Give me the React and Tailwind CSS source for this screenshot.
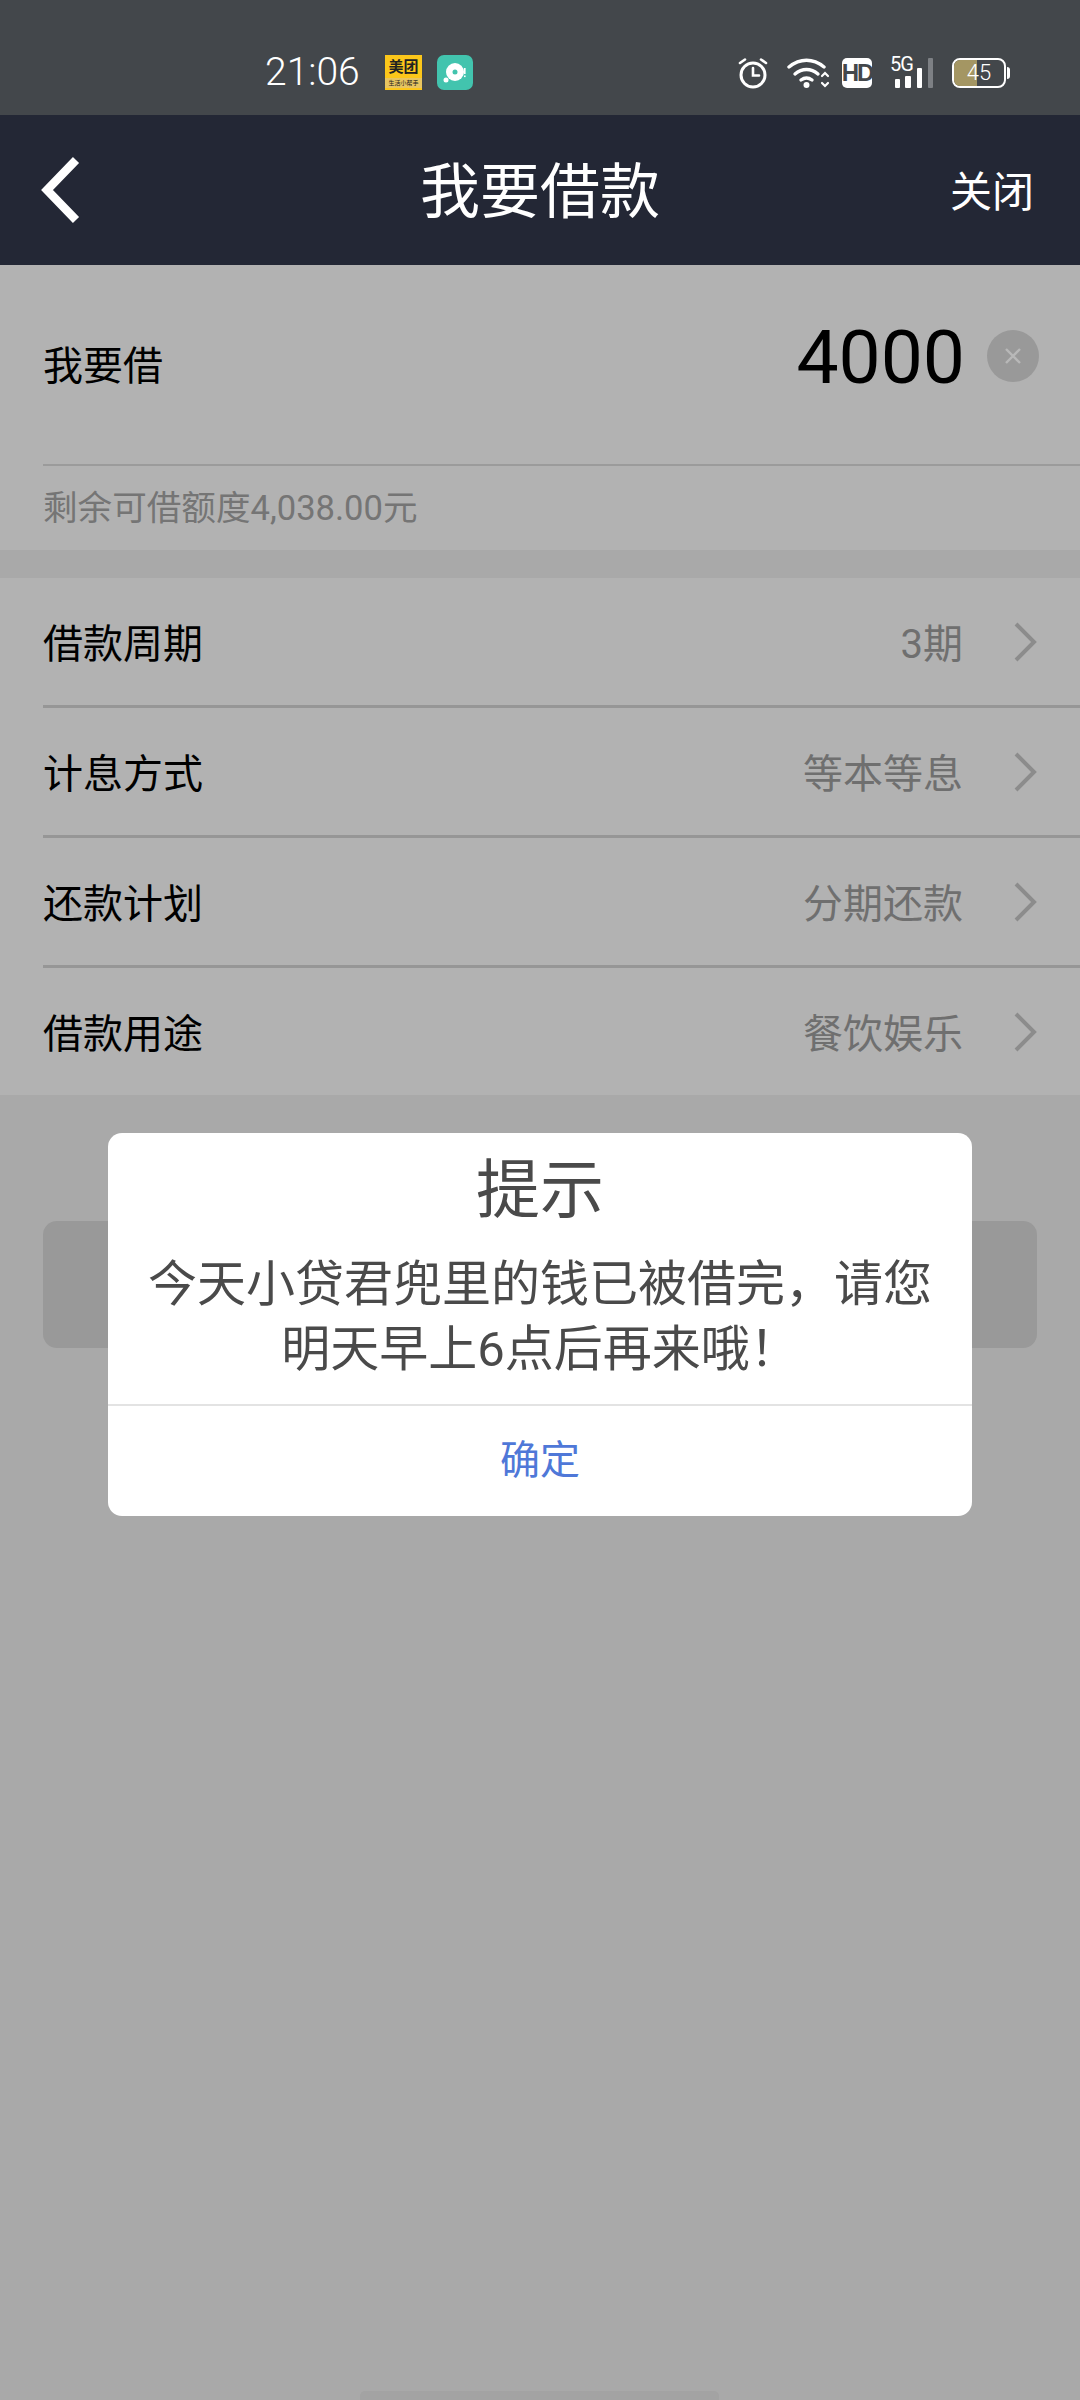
const font = { fontFamily: 'Roboto, "Noto Sans CJK SC", sans-serif' };

function StatusIcons() {
  return (
    <div className="flex items-center">
      {/* alarm */}
      <svg width="32" height="32" viewBox="0 0 32 32" fill="none" stroke="white" strokeWidth="3" strokeLinecap="round" className="ml-[737px]">
        <circle cx="16" cy="18" r="12" />
        <path d="M16 11v7.5h6" strokeWidth="2.6" />
        <path d="M3 6l5-3.5M29 6l-5-3.5" strokeWidth="2.6" />
      </svg>
      {/* wifi */}
      <svg width="44" height="32" viewBox="0 0 44 32" fill="none" stroke="white" strokeLinecap="round" className="ml-[18px]">
        <path d="M2 10C13 1 26 1 37 10" strokeWidth="3.4" />
        <path d="M8 17c7-6 16-6 23 0" strokeWidth="3.4" />
        <path d="M14 23c4-3 7-3 11 0" strokeWidth="3.4" />
        <circle cx="19.5" cy="28" r="3" fill="white" stroke="none" />
        <path d="M35 19l3-3 3 3M35 26l3 3 3-3" strokeWidth="2.2" />
      </svg>
      {/* HD */}
      <div className="ml-[11px] flex h-[30px] w-[30px] items-center justify-center rounded-[5px] bg-white text-[24px] font-bold leading-none tracking-[-2px] text-[#43474b]" style={{ fontFamily: '"Liberation Sans", sans-serif' }}>HD</div>
      {/* 5G signal */}
      <div className="relative ml-[18px] h-[32px] w-[44px]">
        <span className="absolute left-0 top-[-3px] text-[20px] leading-[20px] tracking-[-1px] text-white">5G</span>
        <svg width="44" height="32" viewBox="0 0 44 32" className="absolute left-0 top-0">
          <rect x="5" y="22" width="5" height="9" rx="1" fill="white" />
          <rect x="15" y="19" width="6" height="12" rx="1" fill="white" />
          <rect x="27" y="11" width="5" height="20" rx="1" fill="white" />
          <rect x="38" y="1" width="5" height="30" rx="1" fill="#7d8084" />
        </svg>
      </div>
      {/* battery */}
      <div className="ml-[18px] flex items-center">
        <div className="relative h-[30px] w-[54px] overflow-hidden rounded-[8px] border-[2.5px] border-white">
          <div className="h-full w-[23px] bg-[#a49663]" />
          <span className="absolute inset-0 flex items-center justify-center text-[22px] font-light leading-none text-white">45</span>
        </div>
        <div className="ml-[1px] h-[12px] w-[3px] rounded-r-sm bg-white" />
      </div>
    </div>
  );
}

function StatusBar() {
  return (
    <div className="relative flex h-[115px] items-end bg-[#43474b] pb-[26px]">
      <div className="absolute left-[265px] top-[47px] text-[39px] font-light leading-[50px] text-white">21:06</div>
      <div className="absolute left-[385px] top-[55px] flex h-[35px] w-[37px] flex-col items-center bg-[#fcc71a]">
        <span className="mt-[3px] text-[15px] font-bold leading-[18px] text-[#222]">美团</span>
        <span className="mt-[2px] w-full bg-[#e8c560] text-center text-[6px] leading-[10px] text-[#222]">生活小帮手</span>
      </div>
      <div className="absolute left-[437px] top-[55px] flex h-[35px] w-[36px] items-center justify-center rounded-[7px] bg-[#42c4ae]">
        <svg width="36" height="35" viewBox="0 0 36 35">
          <circle cx="18" cy="17" r="9" fill="white" />
          <circle cx="18" cy="17" r="2.5" fill="#42c4ae" />
          <circle cx="9" cy="25" r="2.5" fill="white" />
          <rect x="27" y="13" width="1.6" height="6" fill="white" />
          <rect x="27" y="20.5" width="1.6" height="1.6" fill="white" />
        </svg>
      </div>
      <StatusIcons />
    </div>
  );
}

function Chevron() {
  return (
    <svg width="23" height="40" viewBox="0 0 23 40" fill="none" stroke="#8c8c8c" strokeWidth="4" className="ml-[51px]">
      <path d="M2 2l18 18L2 38" />
    </svg>
  );
}

function Row({ label, value, last }) {
  return (
    <div className={`flex items-center pl-[43px] ${last ? 'h-[127px]' : 'h-[130px]'}`}>
      <div className={`flex h-full flex-1 items-center pr-[43px] ${last ? '' : 'border-b-[3px] border-[#969696]'}`}>
        <span className="flex-1 pt-[6px] text-[40px] text-black">{label}</span>
        <span className="pt-[6px] text-[40px] text-[#6f6f6f]">{value}</span>
        <Chevron />
      </div>
    </div>
  );
}

export default function App() {
  return (
    <div className="relative h-[2400px] w-[1080px] overflow-hidden bg-[#a9a9a9]" style={font}>
      <StatusBar />

      {/* Header */}
      <div className="relative flex h-[150px] items-center justify-center bg-[#232735]">
        <svg width="44" height="66" viewBox="0 0 44 66" fill="none" stroke="white" strokeWidth="8.5" className="absolute left-[40px] top-[42px]">
          <path d="M36 3L7 33l29 30" />
        </svg>
        <span className="pt-[6px] text-[60px] leading-none text-white">我要借款</span>
        <span className="absolute right-[46px] pt-[6px] text-[42px] leading-none text-white">关闭</span>
      </div>

      {/* Amount */}
      <div className="bg-[#b2b2b2]">
        <div className="ml-[43px] flex h-[201px] items-center border-b-[2px] border-[#9b9b9b] pr-[41px]">
          <span className="flex-1 pt-[4px] text-[40px] text-black">我要借</span>
          <span className="mb-[15px] text-[75px] leading-none text-black">4000</span>
          <div className="mb-[17px] ml-[22px] flex h-[52px] w-[52px] items-center justify-center rounded-full bg-[#999999]">
            <svg width="20" height="20" viewBox="0 0 20 20" stroke="#b8b8b8" strokeWidth="2.4">
              <path d="M3 3l14 14M17 3L3 17" />
            </svg>
          </div>
        </div>
        <div className="flex h-[84px] items-center pl-[43px] pt-[2px] text-[34.6px] text-[#757575]">剩余可借额度4,038.00元</div>
      </div>

      {/* Loan options */}
      <div className="mt-[28px] bg-[#b2b2b2]">
        <Row label="借款周期" value="3期" />
        <Row label="计息方式" value="等本等息" />
        <Row label="还款计划" value="分期还款" />
        <Row label="借款用途" value="餐饮娱乐" last />
      </div>

      {/* Disabled button behind the dialog */}
      <div className="mx-[43px] mt-[126px] h-[127px] rounded-[14px] bg-[#999999]" />

      {/* Dialog */}
      <div className="absolute left-[108px] top-[1133px] h-[383px] w-[864px] overflow-hidden rounded-[14px] bg-white">
        <div className="flex h-[273px] flex-col items-center border-b-[2px] border-[#e3e3e3]">
          <div className="mt-[23px] text-[64px] leading-[70px] text-[#4a4a4a]">提示</div>
          <div className="mt-[26px] w-[790px] text-center text-[49px] leading-[65px] text-[#4a4a4a]">今天小贷君兜里的钱已被借完，请您明天早上6点后再来哦！</div>
        </div>
        <div className="flex h-[108px] items-center justify-center pt-[2px] text-[40px] text-[#4f78d8]">确定</div>
      </div>

      {/* Home indicator */}
      <div className="absolute bottom-0 left-[360px] h-[9px] w-[359px] rounded-t-[5px] bg-[#a3a3a3]" />
    </div>
  );
}
